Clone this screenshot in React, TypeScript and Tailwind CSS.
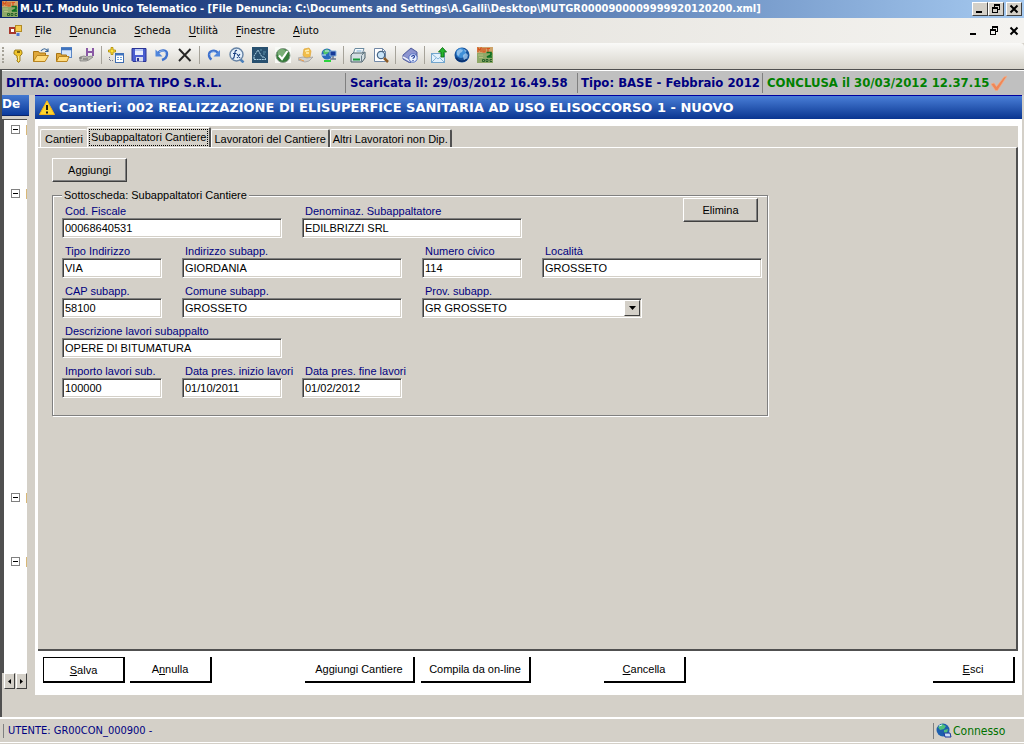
import type { ReactNode } from "react";
import clsx from "clsx";

interface Field {
  id: string;
  label: string;
  value: string;
  wide?: boolean;
  select?: boolean;
  last?: boolean;
}

const MENUS = ["File", "Denuncia", "Scheda", "Utilità", "Finestre", "Aiuto"];

const TABS = [
  "Cantieri",
  "Subappaltatori Cantiere",
  "Lavoratori del Cantiere",
  "Altri Lavoratori non Dip.",
];

const FIELDS: Field[] = [
  { id: "cod-fiscale", label: "Cod. Fiscale", value: "00068640531", wide: true },
  { id: "denominazione", label: "Denominaz. Subappaltatore", value: "EDILBRIZZI SRL", wide: true },
  { id: "tipo-indirizzo", label: "Tipo Indirizzo", value: "VIA" },
  { id: "indirizzo", label: "Indirizzo subapp.", value: "GIORDANIA", wide: true },
  { id: "civico", label: "Numero civico", value: "114" },
  { id: "localita", label: "Località", value: "GROSSETO", wide: true },
  { id: "cap", label: "CAP subapp.", value: "58100" },
  { id: "comune", label: "Comune subapp.", value: "GROSSETO", wide: true },
  { id: "prov", label: "Prov. subapp.", value: "GR GROSSETO", wide: true, select: true },
  { id: "descrizione", label: "Descrizione lavori subappalto", value: "OPERE DI BITUMATURA", wide: true, last: true },
  { id: "importo", label: "Importo lavori sub.", value: "100000" },
  { id: "inizio", label: "Data pres. inizio lavori", value: "01/10/2011" },
  { id: "fine", label: "Data pres. fine lavori", value: "01/02/2012" },
];

function Icon({ children }: { children: ReactNode }) {
  return (
    <svg width="16" height="16" viewBox="0 0 16 16" fill="none" className="shrink-0" aria-hidden="true">
      {children}
    </svg>
  );
}

const mutIcon = (
  <Icon>
    <rect width="16" height="16" fill="#8fa868" />
    <rect width="16" height="6" fill="#cda46a" />
    <path d="M1 5V1l1.500 2L4 1v4M6 1v4h2V1M9.500 1.500H13M11 1.500V5" stroke="#d9531c" strokeWidth="1.200" />
    <path d="M9.500 5.500H14v2.500l-4 2h5" stroke="#0d6f20" strokeWidth="1.700" />
    <path d="M5.500 12.500h2v2h-2zM9 12.500h2v2H9zM15 12.500h-2v2h2" stroke="#1b5c24" strokeWidth=".9" />
    <path d="M1 8h5M2 10.500h4" stroke="#b4bf80" />
  </Icon>
);

const globeIcon = (
  <Icon>
    <circle cx="8" cy="8" r="7.500" fill="#17529b" />
    <circle cx="7" cy="6" r="5" fill="#3f8fd8" />
    <path d="M3 4l3-2 3 1-1 2-2 1-1 3-2-1zM9 8l3-2 2 2-1 4-3 1-1-3zM10 2l3 2-2 1z" fill="#a9cdf0" opacity=".75" />
    <path d="M2 11a7 7 0 0 0 11 1" stroke="#0b2f6b" strokeWidth="1.500" />
  </Icon>
);

const TOOLBAR: { name: string; icon: ReactNode; sep?: boolean }[] = [
  {
    name: "Chiave",
    icon: (
      <Icon>
        <path d="M5 3h6l1 2v2l-2 2v5l-1.500 1.500L7 14v-1l1-1-1-1V9L4 7V5z" fill="#f0c52c" stroke="#8a6a08" strokeWidth=".8" />
        <path d="M7 5h3" stroke="#5c4604" strokeWidth="1.500" />
        <path d="M8.700 9v5" stroke="#fff2a0" />
      </Icon>
    ),
  },
  {
    name: "Apri",
    icon: (
      <Icon>
        <path d="M.5 14.500v-10h5l1 1.500h6v3" fill="#e0a83a" stroke="#a87412" />
        <path d="M.5 14.500L4 8.500h11.500l-3.500 6z" fill="#ffdb7c" stroke="#b88420" />
        <path d="M8 4c2-3 5-3 6.500 0M15 1.500v3h-3" stroke="#3d6899" strokeWidth="1.200" />
      </Icon>
    ),
  },
  {
    name: "Apri scheda",
    icon: (
      <Icon>
        <rect x="5.500" y=".5" width="10" height="10" fill="#d5e6fb" stroke="#5b86c4" />
        <path d="M5 2h11" stroke="#3f73be" strokeWidth="2.500" />
        <path d="M.5 14.500v-8h4l1 1.500h5v2" fill="#e0a83a" stroke="#a87412" />
        <path d="M.5 14.500L3 9.500h10l-2 5z" fill="#ffdb7c" stroke="#b88420" />
      </Icon>
    ),
  },
  {
    name: "Esporta",
    icon: (
      <Icon>
        <path d="M7 1h8v8H7z" fill="#8a59a5" />
        <path d="M9 1h4v3H9zM9 6h4v3H9z" fill="#eee" />
        <path d="M1 10l4-1 3 1 4-1 2 1-4 3-3 1H1z" fill="#bcbcb4" stroke="#777" strokeWidth=".7" />
        <path d="M0 11h3M4 12h5" stroke="#666" />
      </Icon>
    ),
  },
  {
    name: "Nuovo",
    sep: true,
    icon: (
      <Icon>
        <path d="M3 .5h2v2.500h2.500v2H5v2.500H3V5H.5V3H3z" fill="#ffe23a" stroke="#b39108" strokeWidth=".9" />
        <rect x="7.500" y="6.500" width="8" height="9" fill="#fff" stroke="#3f6cb0" />
        <path d="M7 7.500h9" stroke="#3f73be" strokeWidth="2" />
        <path d="M9 10.500h2M12 10.500h2M9 12.500h2M12 12.500h2" stroke="#6ba2dd" />
        <path d="M1.500 10v3.500h4" stroke="#778" strokeDasharray="1 1" />
      </Icon>
    ),
  },
  {
    name: "Salva archivio",
    icon: (
      <Icon>
        <path d="M1 1.500h14v13H2L1 13.500z" fill="#4a5ed0" stroke="#2b3594" />
        <path d="M4 2h8v6H4z" fill="#e8eefc" />
        <path d="M4 2h8v2H4z" fill="#b8c8f4" />
        <path d="M5 10h7v4.500H5z" fill="#d8dcec" />
        <path d="M6 11h2v3H6z" fill="#2b3594" />
      </Icon>
    ),
  },
  {
    name: "Indietro",
    icon: (
      <Icon>
        <path d="M4 6c3-4 9-3 9 1 0 3-2 5-5 6" stroke="#3f72ce" strokeWidth="2.400" />
        <path d="M1.500 2.500v7h7z" fill="#4f86dc" />
        <path d="M5 5c3-2 6-1 7 1" stroke="#9cc1f4" />
      </Icon>
    ),
  },
  {
    name: "Elimina scheda",
    icon: (
      <Icon>
        <path d="M2 2l11.500 12M13.500 2L2 14" stroke="#262626" strokeWidth="1.900" />
      </Icon>
    ),
  },
  {
    name: "Avanti",
    sep: true,
    icon: (
      <Icon>
        <path d="M12 6C9 2 3 4 3 8c0 2 1 3.500 2.500 4.500" stroke="#3f72ce" strokeWidth="2.400" />
        <path d="M14 3v6.500H7.500z" fill="#4f86dc" />
        <path d="M4 8c0-3 4-4 6-2" stroke="#9cc1f4" />
      </Icon>
    ),
  },
  {
    name: "Funzioni",
    icon: (
      <Icon>
        <path d="M11 12l3.500 3.500" stroke="#4b80ba" strokeWidth="2.500" />
        <circle cx="7.500" cy="7.500" r="6.500" fill="#e3effa" stroke="#6683a5" strokeWidth="1.400" />
        <path d="M8 3.500C6 3 6 5 5.700 7L5 10.500c-.3 1-1 1-1.500.7M4 6.500h3.500M8 7l3 4M11 7l-3 4" stroke="#183f80" strokeWidth="1.100" />
      </Icon>
    ),
  },
  {
    name: "Grafico",
    icon: (
      <Icon>
        <rect width="16" height="16" fill="#28506f" />
        <path d="M2 12.500h12M2 12V9l4-6 4 7h2l2 2" stroke="#b9dcec" strokeWidth=".9" strokeDasharray="2 .6" />
        <path d="M8 3h2M11 5h3M11 7h2" stroke="#5f93ad" />
      </Icon>
    ),
  },
  {
    name: "Verifica",
    icon: (
      <Icon>
        <rect width="16" height="16" fill="#f8faf6" />
        <circle cx="8" cy="8.500" r="7" fill="#347b39" stroke="#8b9a8b" />
        <circle cx="7" cy="6.500" r="4.500" fill="#79ae76" />
        <path d="M4 8.500L7 12l5.500-8" stroke="#fff" strokeWidth="2" />
      </Icon>
    ),
  },
  {
    name: "Importi",
    icon: (
      <Icon>
        <path d="M6 2l5-1 2 3-1 6-5 1-2-3z" fill="#f1bd4b" stroke="#dca53a" strokeWidth=".7" />
        <path d="M7 4l4-1M8 6h3" stroke="#fff0b3" strokeWidth="1.500" />
        <path d="M0 11l5-1 4 1 6-1-4 4-4 1-7-2z" fill="#d3d1cd" stroke="#999" strokeWidth=".7" />
        <path d="M1 12l5 2" stroke="#ed9a46" />
      </Icon>
    ),
  },
  {
    name: "Rete",
    icon: (
      <Icon>
        <circle cx="6" cy="7" r="5.500" fill="#2869bd" />
        <path d="M2 4l4-2 3 2-3 3-3 1z" fill="#50c46b" />
        <path d="M9 4h6v5H9z" fill="#173b99" stroke="#8db6dd" />
        <path d="M12 9v3M9 12h6" stroke="#6b7890" strokeWidth="1.500" />
        <path d="M3 14h7" stroke="#2bd33d" strokeWidth="2" />
        <path d="M1 8h4M4 4h4" stroke="#cfeaff" />
      </Icon>
    ),
  },
  {
    name: "Stampa",
    sep: true,
    icon: (
      <Icon>
        <path d="M5 1.500h9l-2 6H3z" fill="#f6fafc" stroke="#6b8aa0" />
        <path d="M6.500 4h5" stroke="#75a9cc" />
        <path d="M1 8l2-2h10l2-1v6l-3 4H1z" fill="#d3dee2" stroke="#495e68" />
        <path d="M11.500 8.500v6M12 8l3-3" stroke="#687d88" />
        <path d="M3 12.500h7" stroke="#169b3a" strokeWidth="2" />
      </Icon>
    ),
  },
  {
    name: "Anteprima",
    icon: (
      <Icon>
        <path d="M1.500 1.500h8l3 3v10h-11z" fill="#fff" stroke="#7188a6" />
        <path d="M9.500 1.500v3h3" stroke="#7188a6" />
        <circle cx="8" cy="8" r="3.700" fill="#c8e4f8" stroke="#486584" strokeWidth="1.200" />
        <path d="M11 11l4 4" stroke="#8b5924" strokeWidth="2.500" />
      </Icon>
    ),
  },
  {
    name: "Guida",
    sep: true,
    icon: (
      <Icon>
        <path d="M1 8l8-7 6 4v5l-7 6-7-4z" fill="#7580bd" stroke="#5460a1" />
        <path d="M1.500 8.500L9 2l5.500 3.500L8 12z" fill="#8d95d0" />
        <path d="M1 10l7 4" stroke="#eceffd" strokeWidth="1.500" />
        <circle cx="11" cy="11" r="4.200" fill="#e9f1ff" stroke="#536fc3" />
        <path d="M9.700 10c0-2 3-2 2.800-.2-.1 1-1.500 1-1.500 2M11 13v1" stroke="#263f9c" strokeWidth="1.200" />
      </Icon>
    ),
  },
  {
    name: "Invia",
    sep: true,
    icon: (
      <Icon>
        <rect x=".5" y="6.500" width="13" height="9" fill="#e2f1fd" stroke="#73a6cd" />
        <path d="M1 7l6 5 6-5M1 15l4-4M13 15l-4-4" stroke="#83b4d7" />
        <path d="M11.500.5L15.500 5H13v5h-3V5H7.500z" fill="#26b52d" stroke="#0b7011" strokeWidth=".9" />
      </Icon>
    ),
  },
  { name: "Internet", icon: globeIcon },
  { name: "MUT", icon: mutIcon },
];

function Caption({ kind }: { kind: "min" | "restore" | "close" }) {
  return (
    <svg width="10" height="10" viewBox="0 0 10 10" fill="none" stroke="black" shapeRendering="crispEdges" aria-hidden="true">
      {kind === "min" && <path d="M1 8h6" strokeWidth="2" />}
      {kind === "restore" && (
        <>
          <path d="M3.500 3V1.500h5v4H7" />
          <path d="M3 1h6M1 4h6" strokeWidth="2" />
          <path d="M1.500 4v4.500h5V4" />
        </>
      )}
      {kind === "close" && (
        <path d="M1.500 1.500l7 7M8.500 1.500l-7 7" strokeWidth="2" shapeRendering="auto" />
      )}
    </svg>
  );
}

const CAPTIONS = [
  { kind: "min", label: "Riduci a icona" },
  { kind: "restore", label: "Ripristina" },
  { kind: "close", label: "Chiudi" },
] as const;

function RaisedButton({ children, className }: { children: ReactNode; className?: string }) {
  return (
    <button
      type="button"
      className={clsx(
        "h-6 w-[75px] border border-t-white border-l-white border-r-[#404040] border-b-[#404040] bg-[#d4d0c8] shadow-[inset_-1px_-1px_0_#808080]",
        className
      )}
    >
      {children}
    </button>
  );
}

function FlatButton({ children, className }: { children: ReactNode; className?: string }) {
  return (
    <button
      type="button"
      className={clsx(
        "h-[26px] shrink-0 border-r-2 border-b-2 border-black bg-white whitespace-nowrap",
        className
      )}
    >
      {children}
    </button>
  );
}

function FormField({ id, label, value, wide, select, last }: Field) {
  const box =
    "block h-5 w-full rounded-none border border-t-[#808080] border-l-[#808080] border-r-white border-b-white bg-white px-[2px] text-black shadow-[inset_1px_1px_0_#404040,inset_-1px_-1px_0_#d4d0c8] outline-none";
  return (
    <div className={clsx(wide && "col-span-2", last && "[&+*]:col-start-1")}>
      <label htmlFor={id} className="block pl-[3px] leading-[14px] whitespace-nowrap text-[#000080]">
        {label}
      </label>
      {select ? (
        <div className="relative">
          <select id={id} defaultValue={value} className={clsx(box, "appearance-none")}>
            <option>{value}</option>
          </select>
          <span className="pointer-events-none absolute top-[2px] right-[2px] flex h-4 w-4 items-center justify-center border border-t-white border-l-white border-r-[#404040] border-b-[#404040] bg-[#d4d0c8]">
            <svg width="7" height="4" viewBox="0 0 7 4" aria-hidden="true">
              <path d="M0 0h7L3.500 4z" fill="black" />
            </svg>
          </span>
        </div>
      ) : (
        <input id={id} type="text" defaultValue={value} className={box} />
      )}
    </div>
  );
}

function TreeNode() {
  return (
    <div className="flex h-16 items-start justify-between pt-[5px] pl-[7px]">
      <button type="button" aria-label="Comprimi" className="flex h-[9px] w-[9px] items-center justify-center border border-[#808080] bg-white">
        <span className="h-px w-[5px] bg-black" />
      </button>
      <span className="h-[10px] w-px bg-[#d8b878]" />
    </div>
  );
}

export default function App() {
  return (
    <div className="flex min-h-screen flex-col bg-[#d4d0c8] font-['Liberation_Sans',Arial,sans-serif] text-[11px] leading-[14px] text-black">
      {/* Title bar */}
      <header className="flex h-[18px] items-center bg-linear-to-r from-[#0a246a] to-[#a6caf0] pr-[2px] pl-[2px]">
        {mutIcon}
        <h1 className="ml-[2px] flex-1 truncate font-['DejaVu_Sans_Condensed','DejaVu_Sans',sans-serif] text-[11px] font-bold text-white">
          M.U.T. Modulo Unico Telematico - [File Denuncia: C:\Documents and Settings\A.Galli\Desktop\MUTGR0000900009999920120200.xml]
        </h1>
        {CAPTIONS.map(({ kind, label }) => (
          <button
            key={kind}
            type="button"
            aria-label={label}
            className={clsx(
              "flex h-[14px] w-4 items-center justify-center border border-t-white border-l-white border-r-[#404040] border-b-[#404040] bg-[#d4d0c8]",
              kind === "close" && "ml-[2px]"
            )}
          >
            <Caption kind={kind} />
          </button>
        ))}
      </header>

      {/* Menu */}
      <nav className="flex h-[25px] items-center bg-linear-to-r from-[#dcd9d2] to-[#f4f3f0] pl-2 font-['DejaVu_Sans_Condensed','DejaVu_Sans',sans-serif]">
        <Icon>
          <rect x="2" y="5" width="5" height="5" fill="#fff" stroke="#a8382c" strokeWidth="2" />
          <rect x="7.500" y="2.500" width="6" height="6" fill="#f7cc4f" stroke="#b18a25" />
          <rect x="8.500" y="10" width="3" height="3" fill="#5278cf" />
        </Icon>
        <div className="ml-[2px] flex flex-1">
          {MENUS.map((m) => (
            <button key={m} type="button" className="px-[9px]">
              <span className="underline underline-offset-2">{m[0]}</span>
              {m.slice(1)}
            </button>
          ))}
        </div>
        <div className="flex gap-[10px] pr-[5px]">
          {CAPTIONS.map(({ kind, label }) => (
            <button key={kind} type="button" aria-label={`${label} scheda`}>
              <Caption kind={kind} />
            </button>
          ))}
        </div>
      </nav>

      {/* Toolbar */}
      <div className="flex h-[26px] items-center rounded-r-sm bg-linear-to-b from-[#fafaf8] to-[#d6d3ca] pb-[2px] pl-[2px]" role="toolbar">
        <span className="mr-[2px] h-4 border-l-2 border-dotted border-[#a5a298]" />
        {TOOLBAR.map(({ name, icon, sep }) => (
          <div key={name} className="flex items-center">
            {sep && <span className="mr-[2px] ml-[3px] h-[18px] w-px bg-[#a6a39a]" />}
            <button type="button" title={name} aria-label={name} className="flex h-[22px] w-[23px] items-center justify-center">
              {icon}
            </button>
          </div>
        ))}
      </div>

      <div className="flex flex-1 flex-col border-t border-l-2 border-[#505050]">
        {/* Company summary */}
        <div className="flex h-[25px] items-center border-t border-white bg-[#c0c0c0] font-['DejaVu_Sans_Condensed','DejaVu_Sans',sans-serif] text-[13px] font-bold whitespace-nowrap text-[#000080]">
          <span className="w-[343px] pl-1">DITTA: 009000 DITTA TIPO S.R.L.</span>
          <span className="w-[232px] border-l border-[#808080] pl-1 leading-5">Scaricata il: 29/03/2012 16.49.58</span>
          <span className="w-[185px] border-l border-[#808080] pl-[3px] leading-5">Tipo: BASE - Febbraio 2012</span>
          <span className="flex flex-1 items-center border-l border-[#808080] pl-1 leading-5 text-[#008000]">
            CONCLUSA il 30/03/2012 12.37.15
            <span className="ml-[2px]">
              <Icon>
                <path d="M0 9l3-1 2.500 3.500L13 2l3-1-9.500 14.500h-2z" fill="#ef8757" stroke="#f6ac84" strokeWidth=".7" />
              </Icon>
            </span>
          </span>
        </div>

        <div className="flex flex-1">
          {/* Tree */}
          <aside className="flex w-[27px] flex-col">
            <h2 className="h-[21px] border-b border-[#0a246a] bg-linear-to-b from-[#4478d0] to-[#0a3a9c] font-['DejaVu_Sans',sans-serif] text-[12px] leading-[18px] font-bold text-white">
              De
            </h2>
            <div className="mt-[3px] mr-[2px] flex-1 border-t border-l-2 border-[#505050] bg-white">
              <TreeNode />
              <TreeNode />
              <div className="mt-60">
                <TreeNode />
                <TreeNode />
              </div>
            </div>
            <div className="mb-[6px] flex h-4 gap-px pr-[2px] pl-[2px]">
              {["left", "right"].map((dir) => (
                <button
                  key={dir}
                  type="button"
                  aria-label={dir === "left" ? "Scorri a sinistra" : "Scorri a destra"}
                  className="flex flex-1 items-center justify-center border border-t-white border-l-white border-r-[#404040] border-b-[#404040]"
                >
                  <svg width="3" height="5" viewBox="0 0 3 5" aria-hidden="true">
                    <path d={dir === "left" ? "M3 0v5L0 2.500z" : "M0 0v5l3-2.500z"} fill="black" />
                  </svg>
                </button>
              ))}
            </div>
          </aside>

          {/* Form window */}
          <main className="mr-[2px] ml-[6px] flex min-w-0 flex-1 flex-col bg-white">
            <div className="flex h-6 items-center border-t border-[#0000a0] bg-linear-to-b from-[#4a7fd8] to-[#0a3590] pl-1">
              <Icon>
                <path d="M8 .8L15.500 14.500H.5z" fill="#ffd52d" stroke="#f5b51a" strokeLinejoin="round" />
                <path d="M8 5v5M8 11.500v2" stroke="#1b1b1b" strokeWidth="2" />
              </Icon>
              <h2 className="ml-1 font-['DejaVu_Sans',sans-serif] text-[13px] font-bold whitespace-nowrap text-white">
                Cantieri: 002 REALIZZAZIONE DI ELISUPERFICE SANITARIA AD USO ELISOCCORSO 1 - NUOVO
              </h2>
            </div>

            <div className="mt-[7px] mr-1 ml-[3px] flex flex-1 flex-col bg-[#d4d0c8]">
              <div role="tablist" className="flex items-end pt-px pl-[2px]">
                {TABS.map((t, i) => (
                  <button
                    key={t}
                    type="button"
                    role="tab"
                    aria-selected={i === 1}
                    className={clsx(
                      "rounded-t-xs border-t border-l border-white whitespace-nowrap",
                      i === 0 && "h-[18px] px-1",
                      i === 1 && "h-5 border-r-2 border-r-[#505050] p-px",
                      i > 1 && "h-[18px] border-r-2 border-r-[#505050] px-[2px]"
                    )}
                  >
                    {i === 1 ? (
                      <span className="block border border-dotted border-black px-px pb-px">{t}</span>
                    ) : (
                      t
                    )}
                  </button>
                ))}
              </div>

              <div role="tabpanel" className="flex-1 border-t border-r-2 border-b-2 border-t-white border-r-[#505050] border-b-[#505050] px-[14px] pt-[10px]">
                <RaisedButton>Aggiungi</RaisedButton>
                <fieldset className="mt-[6px] h-[228px] w-[716px] border border-[#808080] pl-[9px] shadow-[1px_1px_0_#fff,inset_1px_1px_0_#fff]">
                  <legend className="relative bg-[#d4d0c8] px-[2px]">Sottoscheda: Subappaltatori Cantiere</legend>
                  <div className="-mt-1 grid auto-rows-[40px] grid-cols-[repeat(6,100px)] items-end gap-x-5">
                    {FIELDS.slice(0, 2).map((f) => (
                      <FormField key={f.id} {...f} />
                    ))}
                    <RaisedButton className="col-start-6 mr-1 self-start justify-self-end">Elimina</RaisedButton>
                    {FIELDS.slice(2).map((f) => (
                      <FormField key={f.id} {...f} />
                    ))}
                  </div>
                </fieldset>
              </div>
            </div>

            {/* Commands */}
            <div className="flex pt-[6px] pr-[7px] pb-3 pl-2">
              <FlatButton className="w-[82px] border-t border-l">
                <u>S</u>alva
              </FlatButton>
              <FlatButton className="ml-[5px] w-[82px]">
                A<u>n</u>nulla
              </FlatButton>
              <FlatButton className="ml-[93px] w-[110px]">Aggiungi Cantiere</FlatButton>
              <FlatButton className="ml-[6px] w-[110px]">Compila da on-line</FlatButton>
              <FlatButton className="ml-[73px] w-[82px]">
                <u>C</u>ancella
              </FlatButton>
              <FlatButton className="ml-auto w-[82px]">
                <u>E</u>sci
              </FlatButton>
            </div>
          </main>
        </div>
        <div className="h-[22px]" />
      </div>

      {/* Status bar */}
      <footer className="border-t-2 border-white pb-px font-['DejaVu_Sans_Condensed','DejaVu_Sans',sans-serif]">
        <div className="flex h-6 items-center border-b border-white">
          <span className="ml-[3px] flex-1 border-l border-[#808080] pl-1 text-[#000080]">UTENTE: GR00CON_000900 -</span>
          <span className="flex w-[91px] items-center gap-px border-l border-[#808080] pl-[2px] text-[12px] text-[#007000]">
            <Icon>
              <circle cx="7" cy="7" r="6.500" fill="#1c5fae" />
              <path d="M2 4l4-3 4 2-2 3-4 1zM8 7l4-1-1 4-3 1z" fill="#4fc07a" />
              <path d="M3 3l3-1" stroke="#d0f4ff" />
              <path d="M8 10h6l1 4H9z" fill="#c9ddf5" stroke="#16339b" />
            </Icon>
            Connesso
          </span>
        </div>
      </footer>
    </div>
  );
}
